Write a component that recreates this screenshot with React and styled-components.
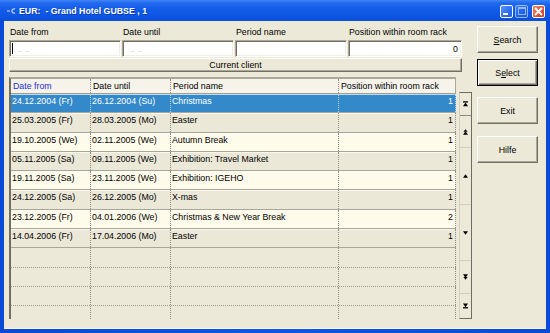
import styled, { createGlobalStyle, css } from "styled-components";

const GlobalStyle = createGlobalStyle`
  html, body {
    margin: 0;
    padding: 0;
  }
  body {
    font-family: "Liberation Sans", Arial, sans-serif;
    font-size: 8.8px;
    color: #000;
    background: #0b4fdc;
  }
`;

const rows = [
  ["24.12.2004 (Fr)", "26.12.2004 (Su)", "Christmas", 1],
  ["25.03.2005 (Fr)", "28.03.2005 (Mo)", "Easter", 1],
  ["19.10.2005 (We)", "02.11.2005 (We)", "Autumn Break", 1],
  ["05.11.2005 (Sa)", "09.11.2005 (We)", "Exhibition: Travel Market", 1],
  ["19.11.2005 (Sa)", "23.11.2005 (We)", "Exhibition: IGEHO", 1],
  ["24.12.2005 (Sa)", "26.12.2005 (Mo)", "X-mas", 1],
  ["23.12.2005 (Fr)", "04.01.2006 (We)", "Christmas & New Year Break", 2],
  ["14.04.2006 (Fr)", "17.04.2006 (Mo)", "Easter", 1],
];

const fields = [
  { label: "Date from", value: " .  .", mask: true, caret: true },
  { label: "Date until", value: " .  .", mask: true },
  { label: "Period name", value: "" },
  { label: "Position within room rack", value: "0", right: true, wide: true },
];

function variantOf(i) {
  if (i === 0) return "selected";
  return i % 2 === 1 ? "grey" : "cream";
}

// small black glyphs of the record navigator
function Arrow({ kind }) {
  const shapes = {
    first: (
      <>
        <rect x="0" y="0" width="5" height="1.3" />
        <path d="M2.5 1.2 L5 5 L0 5 Z" />
      </>
    ),
    pageUp: (
      <>
        <path d="M2.5 0 L4.6 2.6 L0.4 2.6 Z" />
        <path d="M2.5 2 L5 5.4 L0 5.4 Z" />
      </>
    ),
    up: <path d="M2.5 1 L5 4.4 L0 4.4 Z" />,
    down: <path d="M0 1 L5 1 L2.5 4.4 Z" />,
    pageDown: (
      <>
        <path d="M0 0 L5 0 L2.5 3.4 Z" />
        <path d="M0.4 2.8 L4.6 2.8 L2.5 5.4 Z" />
      </>
    ),
    last: (
      <>
        <path d="M0 0.3 L5 0.3 L2.5 4 Z" />
        <rect x="0" y="3.9" width="5" height="1.3" />
      </>
    ),
  };
  return (
    <svg width="5" height="6" viewBox="0 0 5 5.5" fill="#000">
      {shapes[kind]}
    </svg>
  );
}

export default function App() {
  return (
    <>
      <GlobalStyle />
      <Window>
        <TitleBar>
          <TitleIcon viewBox="0 0 9 6" width="9" height="6">
            <rect x="0" y="2.4" width="3" height="1.2" fill="#b9c8e6" />
            <path
              d="M8 1 A2.2 2.2 0 1 0 8 5"
              fill="none"
              stroke="#d6deee"
              strokeWidth="1.2"
            />
          </TitleIcon>
          <TitleText>EUR:  - Grand Hotel GUBSE , 1</TitleText>
          <CaptionButtons>
            <CaptionButton aria-label="Minimize">
              <MinBar />
            </CaptionButton>
            <CaptionButton $faded aria-label="Maximize">
              <MaxBox />
            </CaptionButton>
            <CaptionButton $close aria-label="Close">
              <svg width="9" height="9" viewBox="0 0 9 9">
                <path d="M1 1 L8 8 M8 1 L1 8" stroke="#fff" strokeWidth="1.8" />
              </svg>
            </CaptionButton>
          </CaptionButtons>
        </TitleBar>

        <Client>
          <MainColumn>
            <FieldsRow>
              {fields.map((f) => (
                <Field key={f.label} $wide={f.wide}>
                  <FieldLabel>{f.label}</FieldLabel>
                  <TextBox $right={f.right} $mask={f.mask}>
                    {f.caret && <Caret />}
                    {f.value}
                  </TextBox>
                </Field>
              ))}
            </FieldsRow>
            <ClientBar>Current client</ClientBar>

            <GridArea>
              <Table>
                <HeaderRow>
                  <HeadCell $active>Date from</HeadCell>
                  <HeadCell>Date until</HeadCell>
                  <HeadCell>Period name</HeadCell>
                  <HeadCell>Position within room rack</HeadCell>
                </HeaderRow>
                {rows.map((r, i) => {
                  const v = variantOf(i);
                  return (
                    <Row key={i} $variant={v}>
                      <Cell $variant={v}>{r[0]}</Cell>
                      <Cell $variant={v}>{r[1]}</Cell>
                      <Cell $variant={v}>{r[2]}</Cell>
                      <Cell $variant={v} $right>
                        {r[3]}
                      </Cell>
                    </Row>
                  );
                })}
                {[0, 1, 2, 3].map((i) => (
                  <Row key={"e" + i} $variant="empty">
                    <Cell $variant="empty" />
                    <Cell $variant="empty" />
                    <Cell $variant="empty" />
                    <Cell $variant="empty" />
                  </Row>
                ))}
              </Table>

              <NavStrip>
                <NavSegment $h={23} $strong>
                  <Arrow kind="first" />
                </NavSegment>
                <NavSegment $h={32}>
                  <Arrow kind="pageUp" />
                </NavSegment>
                <NavSegment $h={57}>
                  <Arrow kind="up" />
                </NavSegment>
                <NavSegment $h={56}>
                  <Arrow kind="down" />
                </NavSegment>
                <NavSegment $h={33}>
                  <Arrow kind="pageDown" />
                </NavSegment>
                <NavSegment $h={23} $last>
                  <Arrow kind="last" />
                </NavSegment>
              </NavStrip>
            </GridArea>
          </MainColumn>

          <ButtonColumn>
            <DialogButton $top={0}>
              <u>S</u>earch
            </DialogButton>
            <DialogButton $top={6} $default>
              S<u>e</u>lect
            </DialogButton>
            <DialogButton $top={11}>Exit</DialogButton>
            <DialogButton $top={12}>Hilfe</DialogButton>
          </ButtonColumn>
        </Client>
      </Window>
    </>
  );
}

const Window = styled.div`
  width: 550px;
  height: 333px;
  display: flex;
  flex-direction: column;
  background: linear-gradient(to right, #0a4ad6, #0d56e8 50%, #0a4ad6);
  overflow: hidden;
`;

const TitleBar = styled.div`
  height: 21px;
  flex: none;
  display: flex;
  align-items: center;
  padding: 0 5px 0 7px;
  background: linear-gradient(
    to bottom,
    #3d86f6 0%,
    #2369ee 14%,
    #125ce9 45%,
    #0c55e3 80%,
    #0a4ed8 100%
  );
`;

const TitleIcon = styled.svg`
  flex: none;
  margin-right: 3px;
`;

const TitleText = styled.span`
  flex: 1;
  white-space: pre;
  color: #fff;
  font-weight: bold;
  font-size: 8.8px;
  text-shadow: 1px 1px 0 #0a3bb0;
`;

const CaptionButtons = styled.div`
  display: flex;
  gap: 2px;
  margin-top: 1px;
`;

const CaptionButton = styled.div`
  width: 13px;
  height: 13px;
  box-sizing: border-box;
  border: 1px solid #fff;
  border-radius: 2px;
  display: flex;
  align-items: center;
  justify-content: center;
  position: relative;
  background: linear-gradient(135deg, #5a97fa, #2c6cf0 60%, #2260e4);
  ${(p) =>
    p.$faded &&
    css`
      opacity: 0.55;
    `}
  ${(p) =>
    p.$close &&
    css`
      margin-left: 2px;
      background: linear-gradient(135deg, #f08a6e, #e05a3a 55%, #c8401f);
    `}
`;

const MinBar = styled.span`
  position: absolute;
  left: 2px;
  bottom: 2px;
  width: 5px;
  height: 2px;
  background: #fff;
`;

const MaxBox = styled.span`
  width: 6px;
  height: 5px;
  border: 1px solid #fff;
  border-top-width: 2px;
`;

const Client = styled.div`
  flex: 1;
  margin: 0 4px 4px 4px;
  background: #ece9d8;
  display: flex;
  align-items: flex-start;
  padding: 6px 0 0 5px;
  box-shadow: inset 0 -1px 0 #f7f6ee;
`;

const MainColumn = styled.div`
  width: 463px;
  display: flex;
  flex-direction: column;
`;

const FieldsRow = styled.div`
  display: flex;
  gap: 1px;
  width: 453px;
`;

const Field = styled.div`
  width: ${(p) => (p.$wide ? "114px" : "112px")};
  display: flex;
  flex-direction: column;
`;

const FieldLabel = styled.div`
  height: 13px;
  line-height: 11px;
  padding-left: 1px;
  white-space: nowrap;
`;

const TextBox = styled.div`
  height: 17px;
  box-sizing: border-box;
  background: #fff;
  border: 1px solid;
  border-color: #aca899 #fff #fff #aca899;
  box-shadow: inset 1px 1px 0 #716f64, inset -1px -1px 0 #f1efe2;
  display: flex;
  align-items: center;
  justify-content: ${(p) => (p.$right ? "flex-end" : "flex-start")};
  padding: 0 3px 0 6px;
  white-space: pre;
  color: ${(p) => (p.$mask ? "#a9a9a9" : "#000")};
`;

const Caret = styled.span`
  width: 1px;
  height: 11px;
  background: #000;
  margin-left: -4px;
  margin-right: 3px;
`;

const ClientBar = styled.div`
  width: 453px;
  height: 14px;
  margin-top: 1px;
  box-sizing: border-box;
  border: 1px solid;
  border-color: #fff #716f64 #716f64 #fff;
  box-shadow: inset -1px -1px 0 #aca899;
  display: flex;
  align-items: center;
  justify-content: center;
  padding-bottom: 1px;
`;

const GridArea = styled.div`
  margin-top: 5px;
  height: 242px;
  display: flex;
  align-items: stretch;
`;

const Table = styled.div`
  width: 447px;
  box-sizing: border-box;
  border-top: 2px solid #aca899;
  border-left: 2px solid #716f64;
  box-shadow: inset 0 1px 0 #dcd9c8;
  overflow: hidden;
`;

const columns = "80px 80px 168px 117px";

const HeaderRow = styled.div`
  display: grid;
  grid-template-columns: ${columns};
  height: 15px;
  box-sizing: border-box;
  background: #f5f3ea;
  border-bottom: 1px solid #a19f90;
`;

const HeadCell = styled.div`
  border-right: 1px dotted #8d8b7e;
  padding-left: 2px;
  line-height: 14px;
  white-space: nowrap;
  overflow: hidden;
  color: ${(p) => (p.$active ? "#1f2cd6" : "#000")};
  &:last-child {
    border-right: 1px solid #aca899;
  }
`;

const rowBackgrounds = {
  selected: "#3389c9",
  grey: "#ebe8d8",
  cream: "#fffbea",
  empty: "#ece9d8",
};

const Row = styled.div`
  display: grid;
  grid-template-columns: ${columns};
  height: 19.3px;
  box-sizing: border-box;
  background: ${(p) => rowBackgrounds[p.$variant]};
  ${(p) =>
    p.$variant === "empty"
      ? css`
          border-bottom: 1px dotted #9c9a8c;
        `
      : css`
          border-bottom: 1px solid #a8a696;
          box-shadow: inset 0 1px 0 rgba(255, 255, 255, 0.7);
        `}
`;

const Cell = styled.div`
  border-right: 1px dotted
    ${(p) => (p.$variant === "selected" ? "#b7d6ee" : "#8d8b7e")};
  padding: 0 2px 0 1px;
  line-height: 14px;
  white-space: nowrap;
  overflow: hidden;
  text-align: ${(p) => (p.$right ? "right" : "left")};
  color: ${(p) => (p.$variant === "selected" ? "#fff" : "#000")};
`;

const NavStrip = styled.div`
  width: 13px;
  margin-left: 3px;
  margin-top: 15px;
  box-sizing: border-box;
  border-left: 1px solid #d3d0bf;
  border-right: 1px solid #6f6d62;
  border-top: 1px solid #6f6d62;
  border-bottom: 1px solid #6f6d62;
  display: flex;
  flex-direction: column;
`;

const NavSegment = styled.div`
  height: ${(p) => p.$h}px;
  flex: ${(p) => (p.$last ? "1" : "none")};
  box-sizing: border-box;
  display: flex;
  align-items: center;
  justify-content: center;
  border-bottom: ${(p) =>
    p.$last ? "none" : p.$strong ? "1px solid #8a887b" : "1px solid #d1cebd"};
`;

const ButtonColumn = styled.div`
  margin-left: 5px;
  width: 61px;
  display: flex;
  flex-direction: column;
  margin-top: -1px;
`;

const DialogButton = styled.div`
  margin-top: ${(p) => p.$top}px;
  height: 27px;
  box-sizing: border-box;
  display: flex;
  align-items: center;
  justify-content: center;
  background: #ece9d8;
  border: 1px solid;
  border-color: #fff #716f64 #716f64 #fff;
  box-shadow: inset -1px -1px 0 #aca899;
  ${(p) =>
    p.$default &&
    css`
      border: 1px solid #000;
      box-shadow: inset 1px 1px 0 #fff, inset -1px -1px 0 #716f64,
        inset -2px -2px 0 #aca899;
    `}
  u {
    text-decoration: underline;
  }
`;
